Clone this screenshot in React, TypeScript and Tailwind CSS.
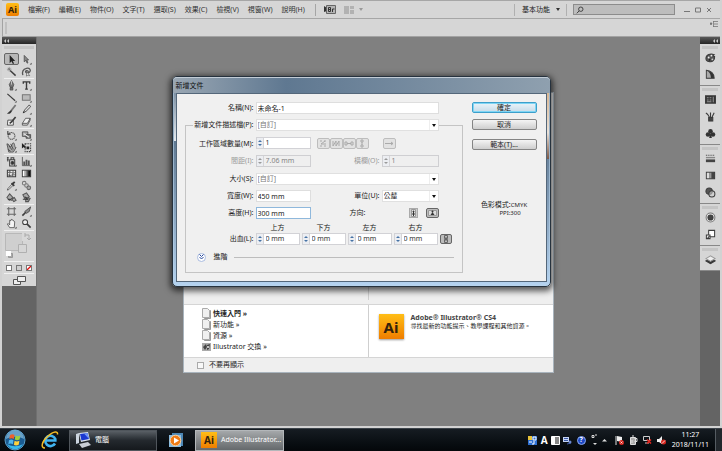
import { useId, type ReactNode } from "react";

type Kids = { children?: ReactNode };

function Ico({ children, size = "size-3" }: Kids & { size?: string }) {
  return (
    <svg viewBox="0 0 12 12" className={`${size} shrink-0`} fill="none" stroke="#3c3c3c" strokeWidth="1.100" aria-hidden="true">
      {children}
    </svg>
  );
}

const corner = <path d="M11.5 9.5v2h-2z" fill="#333" stroke="none" />;

const toolGroups: { name: string; art: ReactNode }[][] = [
  [
    { name: "選取工具", art: <path d="M4 1v9l2-2 1.5 3 1.3-.7L7.4 7.500H10z" fill="#222" stroke="none" /> },
    { name: "直接選取", art: <><path d="M3.500 1.500v7l1.800-1.500 1.400 3 .9-.5L6.300 6.500h2z" fill="#888" stroke="#444" strokeWidth=".8" />{corner}</> },
    { name: "魔術棒", art: <><path d="M4.500 5l6 5.500" strokeWidth="1.500" /><path d="M3.500 1v5M1 3.500h5M2 2l3 3M5 2L2 5" strokeWidth=".6" stroke="#666" /></> },
    { name: "套索", art: <><path d="M2 10c-1-3 0-7 4-7.500s5 2 3.500 4-5 1-4.500-.5 3-1 3 .5" stroke="#555" strokeWidth="1.400" /><path d="M6 6v5l1.500-1 2 .5z" fill="#eee" strokeWidth=".6" /></> },
  ],
  [
    { name: "鋼筆", art: <><path d="M6 .5L3.500 5 4.500 8h3L8.500 5zM4.500 8.500h3v2.500h-3z" fill="#777" strokeWidth=".7" /><path d="M6 1v4" stroke="#eee" strokeWidth=".7" />{corner}</> },
    { name: "文字", art: <><path d="M2.500 4V2h7v2M6 2v8M4.500 10h3" strokeWidth="1.500" />{corner}</> },
    { name: "線段", art: <><path d="M1.500 2l8.500 7.500" strokeWidth="1.300" />{corner}</> },
    { name: "矩形", art: <><path d="M1.500 3h8.500v6H1.500z" fill="#bbb" stroke="#777" />{corner}</> },
    { name: "筆刷", art: <><path d="M10.500 1L5.500 7.500" strokeWidth="1.900" stroke="#777" /><path d="M5.500 6.500L1 10.500c2 .6 4.500 0 5.500-3z" fill="#333" stroke="none" /></> },
    { name: "鉛筆", art: <><path d="M9 1L4 6.500 2.500 9.500 5.500 8 10.500 3z" fill="#ddd" strokeWidth=".9" /><path d="M2 10l1-2 1 1z" fill="#222" stroke="none" />{corner}</> },
    { name: "點滴筆刷", art: <><path d="M2 4.500h6v5.500H1.500z" fill="#f3f3f3" strokeWidth=".9" /><path d="M10.500 1L6 6.500 4 8" strokeWidth="1.800" /></> },
    { name: "橡皮擦", art: <><path d="M5 2.500h5L7 8H1.500z" fill="#eee" strokeWidth=".8" /><path d="M1.500 8v2h5.500l3-5.500v-2" strokeWidth=".8" />{corner}</> },
  ],
  [
    { name: "旋轉", art: <><circle cx="6" cy="6.500" r="3.700" strokeDasharray="1.500 .5" stroke="#555" /><path d="M2 1v3.500h3" strokeWidth="1.200" />{corner}</> },
    { name: "縮放", art: <><path d="M1.500 2h6v5h-6z" fill="#aaa" strokeWidth=".8" /><path d="M5.500 5h5v4h-5z" fill="#777" strokeWidth=".8" /><path d="M3 4l6 4" stroke="#eee" />{corner}</> },
    { name: "彎曲", art: <><path d="M1 2c3 0 2 3 4 3s1-4 3-4 1 6 3 5l-3 5H3z" fill="#aaa" strokeWidth=".8" /><path d="M3 4l4 5M5 2l3 6M2 8l3 2" strokeWidth=".9" />{corner}</> },
    { name: "任意變形", art: <><path d="M4.500 2h6v8.500h-6z" strokeDasharray="1.500 1" /><path d="M1 1v6l2-1.500 2 2V5zM6 5h3v3H6z" fill="#222" stroke="none" /></> },
  ],
  [
    { name: "符號噴灑器", art: <><path d="M4 4h5.500v7H4z" fill="#ddd" /><path d="M5.500 4V2h3v2M1 2h2M1 4h2M2 1v5" /><circle cx="7" cy="7.500" r="1.500" fill="#333" />{corner}</> },
    { name: "長條圖", art: <><path d="M1.500 1v9.500H10" strokeWidth=".8" /><path d="M2.500 6h2v4h-2zM5 4h2v6H5zM7.500 5h2v5h-2z" fill="#555" stroke="none" />{corner}</> },
    { name: "網格", art: <><path d="M1.500 2.500h9v7h-9z" fill="#eee" /><path d="M2 5c3-2 5 2 8 0M2 7.500c3 2 5-1 8 0M4 2.500c1 3-1 4 0 7M7.500 2.500c1 3-1 4 0 7" strokeWidth=".8" /></> },
    { name: "漸層", art: <><path d="M1.500 2.500h9v7h-9z" fill="#555" /><path d="M2 3h2v6H2z" fill="#fff" stroke="none" /><path d="M4 3h2v6H4z" fill="#aaa" stroke="none" /><path d="M8 3h2v6H8z" fill="#111" stroke="none" /></> },
    { name: "檢色滴管", art: <><path d="M6.500 4.500L2 9.500 1.500 11 3 10.500 7.500 6z" fill="#eee" strokeWidth=".8" /><path d="M6 3.500l3 3M7 4.500L9.500 2" strokeWidth="2" />{corner}</> },
    { name: "漸變", art: <><circle cx="3.500" cy="3.500" r="2" fill="#ddd" stroke="#777" /><circle cx="6" cy="6" r="2" fill="#ccc" stroke="#777" /><circle cx="8.500" cy="8.500" r="2" fill="#aaa" stroke="#666" /></> },
    { name: "即時上色油漆桶", art: <><path d="M1 6l3-4 3.500 4L4 9zM6.500 8l2.500-2 2 3-2.500 1.500z" fill="#aaa" stroke="#555" /><path d="M2 8.500c2-1 3-1 4 1" /></> },
    { name: "即時上色選取", art: <><path d="M2 3l4-2 3 4-4 4zM6 6l4 1-2 3.500H5z" fill="#aaa" stroke="#555" /><path d="M4 5l4 4M2 8h6" /></> },
  ],
  [
    { name: "工作區域", art: <path d="M3 1v10M9 1v10M1 3h10M1 9h10" stroke="#666" /> },
    { name: "切片", art: <><path d="M1.500 10.500L6 6" strokeWidth="1.800" /><path d="M10.500 1L4 6l2 2 3-2z" fill="#888" strokeWidth=".8" />{corner}</> },
    { name: "手形", art: <><path d="M4 10.500L1.500 6.500l1-.5 1.500 1.500V2.500l1.300.5.4-1.500 1.200.2.500 1 1.300.5.8 1L9 10.500z" fill="#f5f5f5" strokeWidth=".8" />{corner}</> },
    { name: "放大鏡", art: <><circle cx="4.500" cy="4.500" r="2.700" fill="#eee" /><path d="M6.500 6.500l4 4" strokeWidth="1.800" /></> },
  ],
];

const dockGroups: { name: string; art: ReactNode }[][] = [
  [
    { name: "顏色", art: <><path d="M1 7c0-4 5-6 9-4-2 1-1 2 .5 2C11 9 8 11 5 10.500 2 10.500 1 9 1 7z" fill="#555" /><circle cx="4" cy="6" r="1" fill="#eee" stroke="none" /><circle cx="7" cy="4" r="1" fill="#eee" stroke="none" /><circle cx="5" cy="8.500" r="1" fill="#222" stroke="none" /><circle cx="8" cy="8" r="1" fill="#ccc" stroke="none" /></> },
    { name: "顏色參考", art: <><path d="M1.500 1.500c5 0 8.500 4 8.500 8.500H1.500z" fill="#333" /><path d="M2 2c3 1 4 4 4.500 7.500H2z" fill="#aaa" stroke="none" /></> },
  ],
  [
    { name: "色票", art: <><path d="M.5 2h11v8H.5z" fill="#333" /><path d="M2 4h2M5 4h2M2 6.500h2M5 6.500h2M2 8.500h5M9 3v6" stroke="#999" /></> },
    { name: "筆刷", art: <><path d="M4 7h4.500v4H4z" fill="#444" /><path d="M5 7L2.500 3M6 7V1.500M7.500 7L10 2M1 2l2 2" strokeWidth="1.200" /></> },
    { name: "符號", art: <><circle cx="6" cy="3.500" r="2.500" fill="#333" stroke="none" /><circle cx="3.300" cy="7" r="2.500" fill="#333" stroke="none" /><circle cx="8.700" cy="7" r="2.500" fill="#333" stroke="none" /><path d="M6 5l1.500 6h-3z" fill="#333" stroke="none" /></> },
  ],
  [
    { name: "筆畫", art: <><path d="M1 2.500h10" strokeDasharray="1 1" /><path d="M1 5h10" stroke="#888" strokeWidth="1.500" /><path d="M1 8.500h10" stroke="#444" strokeWidth="3" /></> },
    { name: "漸層", art: <><path d="M1.500 2.500h9v7h-9z" fill="#444" /><path d="M2 3h2.500v6H2z" fill="#ddd" stroke="none" /><path d="M4.500 3H7v6H4.500z" fill="#999" stroke="none" /></> },
    { name: "透明度", art: <><circle cx="4.500" cy="4.500" r="3.500" fill="#555" /><circle cx="7.500" cy="7.500" r="3.300" fill="#ccc" fillOpacity=".6" /></> },
  ],
  [
    { name: "外觀", art: <><circle cx="6" cy="6" r="4.800" fill="#eee" stroke="#777" /><circle cx="6" cy="6" r="2.800" fill="#444" /></> },
    { name: "繪圖樣式", art: <><path d="M4 1.500h6.500v7H4z" fill="#fff" /><path d="M1.500 6.500h4v4h-4z" fill="#eee" /><path d="M3 10l2-2.500" /></> },
  ],
  [{ name: "圖層", art: <><path d="M1 7.500L6 5l5 2.500-5 3z" fill="#333" /><path d="M1 5L6 2l5 3-5 3z" fill="#eee" stroke="#999" /></> }],
];

const menus = ["檔案(F)", "編輯(E)", "物件(O)", "文字(T)", "選取(S)", "效果(C)", "檢視(V)", "視窗(W)", "說明(H)"];

function AiBadge({ className }: { className: string }) {
  return (
    <span className={`flex shrink-0 items-center justify-center bg-linear-to-b from-[#ffbe16] to-[#ee7d00] font-bold text-[#33210a] ${className}`}>
      Ai
    </span>
  );
}

function MenuBar() {
  return (
    <header className="flex h-[19px] items-center border-t border-b border-[#a6a6a6] bg-[#d6d6d6] pr-2 pl-1 text-[#333]">
      <AiBadge className="mr-[9px] size-[13px] rounded-[2px] text-[9px]" />
      <nav className="flex gap-[9px]">
        {menus.map((m) => (
          <button key={m} className="whitespace-nowrap">{m}</button>
        ))}
      </nav>
      <span className="mr-2 ml-2.5 h-3 w-px bg-[#a5a5a5]" />
      <button className="flex h-[9px] items-center" aria-label="Bridge">
        <svg viewBox="0 0 12 9" className="h-[9px] w-3" aria-hidden="true">
          <path d="M0 1l3 2v3L0 7z" fill="#333" />
          <path d="M2.500.5h9v8h-9z" fill="#b5b5b5" stroke="#666" />
          <path d="M4.500 2.500v4h2v-4zM4.500 4.500h2M8.500 7V4h2" fill="none" stroke="#333" />
        </svg>
      </button>
      <button className="ml-2 flex items-center gap-1" aria-label="排列文件">
        <svg viewBox="0 0 11 8" className="h-2 w-[11px]" aria-hidden="true">
          <path d="M0 0h5v8H0zM6 0h4v3H6zM6 4h4v4H6z" fill="#b2b2b2" />
        </svg>
        <svg viewBox="0 0 4 3" className="h-[3px] w-1" aria-hidden="true"><path d="M0 0h4L2 3z" fill="#999" /></svg>
      </button>
      <div className="ml-auto flex items-center">
        <span className="h-3 w-px bg-[#b0b0b0]" />
        <button className="flex items-center gap-1.5 pr-1.5 pl-[7px] text-[#222]">
          基本功能
          <svg viewBox="0 0 4 3" className="h-[3px] w-1" aria-hidden="true"><path d="M0 0h4L2 3z" fill="#333" /></svg>
        </button>
        <span className="mr-1.5 h-3 w-px bg-[#b0b0b0]" />
        <label className="mr-px flex h-[11px] w-[102px] items-center border border-[#8c8c8c] bg-[#bdbdbd] pl-0.5">
          <svg viewBox="0 0 8 8" className="size-2 shrink-0" fill="none" stroke="#444" aria-hidden="true">
            <circle cx="4.800" cy="3.200" r="2.200" /><path d="M3.200 4.800L.8 7.300" />
          </svg>
          <input aria-label="搜尋" className="min-w-0 flex-1 bg-transparent outline-none" />
        </label>
        <div className="flex gap-[5px] pl-2">
          <button aria-label="最小化"><svg viewBox="0 0 6 6" className="size-1.5"><path d="M0 4.500h6" stroke="#777" /></svg></button>
          <button aria-label="最大化"><svg viewBox="0 0 6 6" className="size-1.5"><path d="M.5 1h5v4h-5z" fill="none" stroke="#777" /></svg></button>
          <button aria-label="關閉"><svg viewBox="0 0 6 6" className="size-1.5"><path d="M1 1l4 4M5 1L1 5" stroke="#777" /></svg></button>
        </div>
      </div>
    </header>
  );
}

function OptionsBar() {
  return (
    <div className="flex h-[18px] items-start justify-between border-b border-l border-[#a3a3a3] bg-[#d6d6d6] pr-0.5">
      <span className="mt-[3px] ml-0.5 h-3 w-0.5 bg-[#c0c0c0]" />
      <button aria-label="面板選單" className="mt-0.5">
        <svg viewBox="0 0 8 6" className="h-1.5 w-2"><path d="M0 2h2L1 4zM3 .5h5M4 3h4M3 5.500h5M3.500 0v6" fill="#555" stroke="#777" strokeWidth=".8" /></svg>
      </button>
    </div>
  );
}

function PanelHead({ end }: { end?: boolean }) {
  return (
    <div className={`flex h-[7px] shrink-0 items-center bg-linear-to-b from-[#5a5a5a] to-[#262626] px-0.5 ${end ? "justify-end" : ""}`}>
      <svg viewBox="0 0 5 4" className="h-1 w-[5px]" aria-hidden="true"><path d="M2 0L0 2l2 2zM5 0L3 2l2 2z" fill="#ccc" /></svg>
    </div>
  );
}

function Toolbox() {
  return (
    <aside className="flex w-[35px] shrink-0 flex-col border-r border-[#707070] bg-[#646464]">
      <PanelHead />
      <div className="bg-[#d6d6d6] px-0.5">
        <div className="py-0.5 pb-1"><div className="h-[3px] bg-[#c5c5c5]" /></div>
        {toolGroups.map((group, g) => (
          <div key={g} className="grid grid-cols-2 border-b border-[#f0f0f0] pb-px">
            {group.map((t, i) => (
              <button
                key={t.name}
                aria-label={t.name}
                className={`flex h-3 items-center justify-center ${g === 0 && i === 0 ? "rounded-[2px] border border-[#666] bg-[#b8b8b8]" : ""}`}
              >
                <Ico size="size-[11px]">{t.art}</Ico>
              </button>
            ))}
          </div>
        ))}
        <div className="border-b border-[#f0f0f0] py-px">
          <svg viewBox="0 0 30 28" className="h-7 w-full" aria-hidden="true">
            <path d="M1.500 1.500h17v17h-17z" fill="#cfcfcf" stroke="#b8b8b8" />
            <path d="M14.500 12.500h8v8h-8z" fill="#d6d6d6" stroke="#b0b0b0" />
            <path d="M18 0h9v9h-9z" fill="#d8d8d8" />
            <path d="M21 3h4v4M21 1v4M23 6l2 2 2-2" fill="none" stroke="#aaa" />
            <path d="M4.500 21.500h4v4h-4z" fill="#aaa" stroke="#999" /><path d="M2 19h5v5H2z" fill="#fff" />
          </svg>
        </div>
        <div className="flex h-3 items-center justify-around border-b border-[#f0f0f0]">
          <button aria-label="顏色" className="size-1.5 border border-[#777] bg-white" />
          <button aria-label="漸層" className="size-1.5 border border-[#777] bg-[#d0d0d0]" />
          <button aria-label="無" className="size-1.5 border border-[#777] bg-white">
            <svg viewBox="0 0 4 4" className="size-1"><path d="M0 4l4-4" stroke="#e01010" strokeWidth="1.300" /></svg>
          </button>
        </div>
        <div className="flex h-3 items-center justify-center">
          <button aria-label="螢幕模式">
            <svg viewBox="0 0 13 9" className="h-[9px] w-[13px]" fill="#eee" stroke="#555"><path d="M.5 3.500h7v5h-7z" /><path d="M4.500.5h8v5h-8z" /></svg>
          </button>
        </div>
      </div>
    </aside>
  );
}

function Dock() {
  return (
    <aside className="flex w-5 shrink-0 flex-col bg-[#646464]">
      <PanelHead end />
      {dockGroups.map((group, g) => (
        <div key={g} className="border-b border-[#888] bg-[#d6d6d6] pt-0.5 pb-0.5">
          <div className="mx-0.5 h-[3px] bg-[#c5c5c5]" />
          {group.map((p) => (
            <button key={p.name} aria-label={p.name} className="flex h-[17px] w-full items-center justify-center">
              <Ico size="size-[11px]">{p.art}</Ico>
            </button>
          ))}
        </div>
      ))}
    </aside>
  );
}

function WelcomeScreen() {
  const page = (
    <svg viewBox="0 0 9 11" className="h-[11px] w-[9px]" aria-hidden="true">
      <path d="M2.500 2.500h6v8h-6z" fill="#bbb" stroke="#999" /><path d="M.5.5h5l2 2v7h-7z" fill="#f0f0f0" stroke="#aaa" />
    </svg>
  );
  return (
    <section className="absolute inset-x-0 top-[55px] mx-auto flex h-[281px] w-[371px] flex-col border border-[#a9b4bd] bg-[#efefef]">
      <div className="flex flex-1 justify-center pb-1"><span className="w-px bg-[#cfcfcf]" /></div>
      <div className="grid h-[54px] grid-cols-2 border-t border-b border-[#d5d5d5] bg-white">
        <ul className="flex flex-col border-r border-[#cfcfcf] pt-[3px] pl-[18px] text-[#222]">
          {["快速入門", "新功能", "資源"].map((t, i) => (
            <li key={t} className="flex h-[11px] items-center gap-0.5">
              {page}
              <a href="#" className={i === 0 ? "font-bold" : ""}>{t} »</a>
            </li>
          ))}
          <li className="flex h-3 items-center gap-0.5">
            <svg viewBox="0 0 9 8" className="h-2 w-[9px]" aria-hidden="true">
              <path d="M0 0h9v8H0z" fill="#aaa" /><path d="M1 4l3-3 1 3-2 3zM5 2l3-1-1 5-2 1z" fill="#444" /><circle cx="6" cy="4" r="1" fill="#eee" />
            </svg>
            <a href="#">Illustrator 交換 »</a>
          </li>
        </ul>
        <div className="flex items-start gap-[7px] pt-2 pl-2.5">
          <AiBadge className="mt-px size-[25px] text-[15px] shadow-[0_1px_2px_#999]" />
          <div className="text-[#444]">
            <h2 className="leading-[9px] font-bold">Adobe® Illustrator® CS4</h2>
            <p className="text-[6px] leading-[9px] whitespace-nowrap text-[#222]">尋找最新的功能提示、教學課程和其他資源。</p>
          </div>
        </div>
      </div>
      <label className="flex h-[14px] items-center gap-[5px] pl-[13px] text-[#222]">
        <input type="checkbox" className="size-[7px] appearance-none border border-[#aaa] bg-[#f8f8f8]" />
        不要再顯示
      </label>
    </section>
  );
}

function SelectBox({ id, value, className, label }: { id?: string; value: string; className: string; label?: string }) {
  return (
    <span className={`relative flex h-3 ${className}`}>
      <select id={id} aria-label={label} className="w-full appearance-none border border-[#e0e0e0] bg-white pl-px outline-none">
        <option>{value}</option>
      </select>
      <span className="pointer-events-none absolute inset-y-px right-px flex w-[9px] items-center justify-center border-l border-[#eee]">
        <svg viewBox="0 0 4 3" className="h-[3px] w-1" aria-hidden="true"><path d="M0 0h4L2 3z" fill="#111" /></svg>
      </span>
    </span>
  );
}

function Spin({ id, value, className, disabled, label }: { id?: string; value: string; className: string; disabled?: boolean; label?: string }) {
  return (
    <span className={`flex h-3 border ${className} ${disabled ? "border-[#cfcfd2] bg-[#efefef] text-[#858585]" : "border-[#d2d2d6] bg-white text-[#333]"}`}>
      <span className="flex w-[7px] shrink-0 flex-col items-center justify-evenly border-r border-[#d5d5d8] bg-[#eceef2]">
        <svg viewBox="0 0 4 2" className="h-0.5 w-1" aria-hidden="true"><path d="M0 2h4L2 0z" fill={disabled ? "#999" : "#4673a5"} /></svg>
        <svg viewBox="0 0 4 2" className="h-0.5 w-1" aria-hidden="true"><path d="M0 0h4L2 2z" fill={disabled ? "#999" : "#4673a5"} /></svg>
      </span>
      <input id={id} aria-label={label} defaultValue={value} disabled={disabled} className="w-full min-w-0 bg-transparent pl-0.5 outline-none" />
    </span>
  );
}

function Lbl({ htmlFor, children, dim }: Kids & { htmlFor?: string; dim?: boolean }) {
  return (
    <label htmlFor={htmlFor} className={`text-right whitespace-nowrap ${dim ? "text-[#9a9a9a]" : ""}`}>{children}</label>
  );
}

function PushButton({ children, primary }: Kids & { primary?: boolean }) {
  return (
    <button
      className={`flex h-[11px] items-center justify-center rounded-[2px] border bg-linear-to-b ${primary ? "border-[#3c9fcb] from-[#eaf4fa] to-[#c6dbe8] ring-1 ring-[#7fd6f5] ring-inset" : "border-[#858585] from-[#f4f4f4] to-[#cecece]"}`}
    >
      {children}
    </button>
  );
}

const flowIcons = [
  { name: "依列設定格點", d: "M2 2h2M6 2h2M7 2L3 5h5M2 7h2M6 7h2" },
  { name: "依欄設定格點", d: "M2 2v5L5 2v5L8 2v5" },
  { name: "依列排列", d: "M1 3v3h2V3zM3 4.500h4M7 3v3h2V3z" },
  { name: "依欄排列", d: "M4 1h2v2H4zM5 3v3M4 6h2v2H4z" },
];

function FlowButton({ name, d }: { name: string; d: string }) {
  return (
    <button aria-label={name} disabled className="flex h-[11px] w-[13px] items-center justify-center rounded-[2px] border border-[#bdbdbd] bg-[#e2e2e2]">
      <svg viewBox="0 0 10 9" className="h-[9px] w-2.5" fill="none" stroke="#aaa"><path d={d} /></svg>
    </button>
  );
}

function NewDocumentDialog() {
  const id = useId();
  const row = "grid grid-cols-[61px_92px_30px_57px] items-center gap-x-0.5";
  return (
    <section
      role="dialog"
      aria-labelledby={`${id}-title`}
      className="absolute inset-x-0 top-[76px] mx-auto w-[379px] rounded-[5px] border border-[#26323e] bg-linear-to-b from-[#7f91a3] via-[#5f7891] via-30% to-[#b5d3f0] px-[3px] pb-1 shadow-[0_2px_6px_2px_rgba(0,0,0,0.65)] ring-1 ring-[#b9d4ea]/60 ring-inset"
    >
      <span aria-hidden="true" className="absolute top-4 left-px h-12 w-0.5 bg-linear-to-b from-[#7f91a3] to-[#e6ebef]" />
      <span aria-hidden="true" className="absolute top-4 right-px h-[66px] w-0.5 bg-linear-to-b from-[#d9b793] via-[#e9e1d8] via-60% to-[#7d5a48]" />
      <h1
        id={`${id}-title`}
        className="-mx-[3px] flex h-4 items-center rounded-t-[4px] border-t border-[#c2ccd6] bg-linear-to-r from-[#9aa7b3] via-[#5f7891] via-30% to-[#8fa0af] pl-[3px] text-[#111]"
      >
        新增文件
      </h1>
      <div className="flex justify-between border border-[#54677a] bg-[#f0f0f0] pr-[9px] pb-2 pl-2 text-[#222]">
        <form className="w-[278px] pt-2">
          <div className={`${row} mb-[5px] pl-2`}>
            <Lbl htmlFor={`${id}-n`}>名稱(N):</Lbl>
            <input id={`${id}-n`} defaultValue="未命名-1" className="col-span-3 h-3 w-[183px] border border-[#dedede] bg-white pl-px outline-none" />
          </div>
          <fieldset className="border border-[#c4c4c4] pb-2.5 pl-[7px]">
            <legend className="flex items-center gap-0.5">
              <span className="flex w-[61px] justify-end"><Lbl htmlFor={`${id}-p`}>新增文件描述檔(P):</Lbl></span>
              <SelectBox id={`${id}-p`} value="[自訂]" className="w-[183px] text-[#777]" />
            </legend>
            <div className={`${row} h-[18px] items-end pt-1.5`}>
              <Lbl htmlFor={`${id}-m`}>工作區域數量(M):</Lbl>
              <Spin id={`${id}-m`} value="1" className="w-[55px]" />
              <div className="col-span-2 -ml-[33px] flex">
                {flowIcons.map((f) => <FlowButton key={f.name} {...f} />)}
                <span className="w-3.5" />
                <FlowButton name="改為由右至左版面" d="M1 4.500h8M7 3l2 1.500L7 6" />
              </div>
            </div>
            <div className={`${row} mt-1.5 h-3`}>
              <Lbl htmlFor={`${id}-i`} dim>間距(I):</Lbl>
              <Spin id={`${id}-i`} value="7.06 mm" disabled className="w-[55px]" />
              <Lbl htmlFor={`${id}-o`} dim>橫欄(O):</Lbl>
              <Spin id={`${id}-o`} value="1" disabled className="w-[57px]" />
            </div>
            <div className={`${row} mt-1.5 h-3`}>
              <Lbl htmlFor={`${id}-s`}>大小(S):</Lbl>
              <SelectBox id={`${id}-s`} value="[自訂]" className="col-span-3 text-[#777]" />
            </div>
            <div className={`${row} mt-[5px] h-3`}>
              <Lbl htmlFor={`${id}-w`}>寬度(W):</Lbl>
              <input id={`${id}-w`} defaultValue="450 mm" className="h-3 w-[55px] border border-[#dedede] bg-white pl-px outline-none" />
              <Lbl htmlFor={`${id}-u`}>單位(U):</Lbl>
              <SelectBox id={`${id}-u`} value="公釐" className="w-full" />
            </div>
            <div className={`${row} mt-[5px] h-3`}>
              <Lbl htmlFor={`${id}-h`}>高度(H):</Lbl>
              <input id={`${id}-h`} defaultValue="300 mm" className="h-3 w-[55px] border border-[#8fb8dc] bg-white pl-px outline-none" />
              <span>方向:</span>
              <div className="flex items-center justify-end gap-2">
                <button type="button" aria-label="直式" className="flex h-2.5 w-[9px] items-center justify-center border border-[#aaa] bg-[#ccc]">
                  <svg viewBox="0 0 7 8" className="h-2 w-[7px]"><path d="M1.500.5h4v7h-4z" fill="#eee" stroke="#999" /><circle cx="3.500" cy="2.500" r="1" fill="#333" /><path d="M3.500 3v4M2 5h3" stroke="#333" /></svg>
                </button>
                <button type="button" aria-label="橫式" aria-pressed="true" className="flex h-2.5 w-[13px] items-center justify-center rounded-[2px] border border-[#666] bg-[#bdbdbd]">
                  <svg viewBox="0 0 9 8" className="h-2 w-[9px]"><path d="M.5 1.500h8v5h-8z" fill="#ddd" stroke="#999" /><circle cx="4.500" cy="2.500" r="1" fill="#333" /><path d="M2.500 6l2-3 2 3z" fill="#333" /></svg>
                </button>
              </div>
            </div>
            <div className="mt-1 flex items-end gap-0.5">
              <span className="flex h-3 w-[61px] items-center justify-end">出血(L):</span>
              {["上方", "下方", "左方", "右方"].map((side) => (
                <label key={side} className="flex w-[44px] flex-col items-center">
                  <span className="h-2.5">{side}</span>
                  <Spin value="0 mm" className="w-full" label={`出血${side}`} />
                </label>
              ))}
              <button type="button" aria-label="使所有設定相同" aria-pressed="true" className="mb-px flex h-2.5 w-3 items-center justify-center rounded-[2px] border border-[#666] bg-[#bcbcbc]">
                <svg viewBox="0 0 6 8" className="h-2 w-1.5"><path d="M1.500.5h3v3h-3zM1.500 4.500h3v3h-3zM3 2v4" fill="none" stroke="#666" /></svg>
              </button>
            </div>
            <div className="mt-[7px] flex h-2.5 items-center pr-2 pl-1">
              <button type="button" aria-label="展開進階" className="flex size-[9px] items-center justify-center rounded-full border border-[#a9bbe0] bg-white">
                <svg viewBox="0 0 5 6" className="h-1.5 w-[5px]" fill="none" stroke="#27489c"><path d="M.5.500l2 2 2-2M.5 3l2 2 2-2" /></svg>
              </button>
              <span className="ml-2">進階</span>
              <span className="ml-1.5 h-px flex-1 bg-[#bdbdbd]" />
            </div>
          </fieldset>
        </form>
        <div className="flex w-[65px] flex-col pt-2">
          <PushButton primary>確定</PushButton>
          <div className="h-1.5" />
          <PushButton>取消</PushButton>
          <div className="h-[9px]" />
          <PushButton>範本(T)...</PushButton>
          <dl className="mt-[51px] text-center leading-[8px]">
            <div className="flex justify-center"><dt>色彩模式:</dt><dd className="text-[6px]">CMYK</dd></div>
            <div className="flex justify-center pl-3 text-[6px]"><dt>PPI:</dt><dd>300</dd></div>
          </dl>
        </div>
      </div>
    </section>
  );
}

function Taskbar() {
  return (
    <footer className="flex h-[23px] shrink-0 items-center border-t border-[#3b4249] bg-linear-to-b from-[#161c22] to-[#04070a] text-white">
      <button aria-label="開始" className="ml-1">
        <svg viewBox="0 0 22 22" className="size-[22px]">
          <circle cx="11" cy="11" r="10" fill="#1b5b91" stroke="#5b9fca" />
          <path d="M2 10a9 9 0 0118 0c-6-3-12-3-18 0z" fill="#8abfe0" fillOpacity=".7" />
          <path d="M3 15c4 7 12 7 16 0-5 3-11 3-16 0z" fill="#36b8ec" />
          <path d="M6 6c2-1 3-1 4.500 0l-.7 4c-1.500-1-3-1-4.500 0z" fill="#f0602c" />
          <path d="M11.500 6.500c1.500 1 3 1 4.800 0l-.7 4c-2 1-3.300 1-4.800 0z" fill="#9cd13c" />
          <path d="M5 11.200c1.500-1 3-1 4.500 0l-.7 4c-1.500-1-3-1-4.500 0z" fill="#4fb6ee" />
          <path d="M10.600 11.700c1.500 1 3 1 4.800 0l-.7 4c-2 1-3.300 1-4.800 0z" fill="#ffd23c" />
        </svg>
      </button>
      <button aria-label="Internet Explorer" className="ml-[15px]">
        <svg viewBox="0 0 18 18" className="size-[18px]" fill="none">
          <path d="M14 12.500a5.200 5.200 0 11.300-4.500v1.500H5" stroke="#41b4f0" strokeWidth="2.600" />
          <path d="M4 17C-1 17 1 10 7 5s10-5 9.500-1.500" stroke="#f5bd27" strokeWidth="1.500" />
        </svg>
      </button>
      <button className="ml-2.5 flex h-[21px] w-[88px] items-center gap-1 border border-[#50565c] bg-linear-to-b from-[#5a6066] via-[#24292e] to-[#15191d] pl-[5px]">
        <svg viewBox="0 0 16 16" className="size-4" aria-hidden="true">
          <path d="M1 2l3-1v10l-3 1z" fill="#ccd5df" /><path d="M4 1l9-1 2 8-9 2z" fill="#dde6f0" /><path d="M5 2l7.500-1 1.500 6-7.500 1.500z" fill="#1b38cf" /><path d="M9 1.500l3.500-.5 1.500 6z" fill="#6f94f5" /><path d="M4 12l9-2 3 3-9 3z" fill="#c9ced5" />
        </svg>
        電腦
      </button>
      <button aria-label="Windows Media Player" className="ml-3">
        <svg viewBox="0 0 15 15" className="size-[15px]">
          <path d="M3 0h11v13H3z" fill="#4d88b5" /><path d="M0 2h12v12H0z" fill="#8abce0" /><circle cx="6.500" cy="7.500" r="5.300" fill="#ef7c16" stroke="#ffd09b" /><path d="M5 4.500l5 3-5 3z" fill="#fff" />
        </svg>
      </button>
      <button className="ml-[11px] flex h-[21px] w-[89px] items-center gap-1 border border-[#b3b7ba] bg-linear-to-b from-[#a5a8aa] to-[#65696c] pl-[5px]">
        <AiBadge className="size-4 text-[10px]" />
        <span className="whitespace-nowrap">Adobe Illustrator...</span>
      </button>
      <div className="ml-auto flex items-center">
        <div className="flex items-center gap-[3px] pr-[3px]">
          <svg viewBox="0 0 9 9" className="mr-px size-[9px]" aria-hidden="true"><path d="M0 0h9v9H0z" fill="#2d6fd2" /><path d="M0 0h4v4H0z" fill="#e8c33a" /><path d="M5 1h3v3H5zM1 6h3M6 5v3H4" fill="none" stroke="#fff" /></svg>
          <span className="text-[10px] leading-[10px] font-bold">A</span>
          <svg viewBox="0 0 9 9" className="size-[9px]" aria-hidden="true"><path d="M.5.500h8v8h-8z" fill="#888" stroke="#fff" /><path d="M1 1h3v7H1z" fill="#fff" /></svg>
          <svg viewBox="0 0 9 9" className="size-[9px]" aria-hidden="true"><path d="M0 1h6v5H0z" fill="#c6d5f4" /><path d="M1 2.500h4M1 4.500h4M4 8l4-1" stroke="#3a58a8" /><circle cx="7" cy="6" r="1.500" fill="#6b86cc" /></svg>
          <span className="mx-0.5 flex size-[9px] items-center justify-center rounded-full border border-[#8da9ef] bg-[#1d48c4] font-bold">?</span>
          <svg viewBox="0 0 7 12" className="h-3 w-[7px]" fill="none" stroke="#ddd" aria-hidden="true"><path d="M1 1.500h2v2H1zM4 1h2" /><path d="M2 9h4L4 11z" fill="#ddd" stroke="none" /></svg>
          <svg viewBox="0 0 5 4" className="mx-px h-1 w-[5px]" aria-hidden="true"><path d="M0 3.500h5L2.500 1z" fill="#ddd" /></svg>
        </div>
        <div className="flex gap-[5px] pl-1">
          <svg viewBox="0 0 9 10" className="h-2.5 w-[9px]" aria-hidden="true"><path d="M1 1v9" stroke="#ddd" /><path d="M2 1l5 1v5l-5-1z" fill="#eee" /><circle cx="6.500" cy="7.500" r="2.500" fill="#d6261e" /><path d="M5.500 6.500l2 2M7.500 6.500l-2 2" stroke="#fff" strokeWidth=".7" /></svg>
          <svg viewBox="0 0 9 10" className="h-2.5 w-[9px]" fill="none" stroke="#ddd" aria-hidden="true"><path d="M1.500 2.500h5v7h-5z" fill="#aaa" /><path d="M3 1h2M5.500 3.500H8v3H5.500M3 5v3" /></svg>
          <svg viewBox="0 0 9 10" className="h-2.5 w-[9px]" fill="none" aria-hidden="true"><path d="M.5 1.500h6v4h-6zM2 8h4" stroke="#ccc" /><path d="M4 4.500l4 4M8 4.500l-4 4" stroke="#e5261e" strokeWidth="1.500" /></svg>
          <svg viewBox="0 0 9 10" className="h-2.5 w-[9px]" aria-hidden="true"><path d="M0 4h2l3-3v8L2 7H0z" fill="#eee" /><circle cx="6.500" cy="7" r="2.500" fill="#d6261e" /><path d="M5 8.500l3-3" stroke="#fff" strokeWidth=".8" /></svg>
        </div>
        <time className="mx-1.5 flex flex-col text-center leading-[10px]"><span>11:27</span><span>2018/11/11</span></time>
        <button aria-label="顯示桌面" className="h-[22px] w-[7px] border-l border-[#555c62] bg-[#22272c]" />
      </div>
    </footer>
  );
}

export default function App() {
  return (
    <div className="relative flex h-screen flex-col overflow-hidden bg-black font-['Noto_Sans','Noto_Sans_CJK_TC',sans-serif] text-[7px] leading-[10px]">
      <div className="flex min-h-0 flex-1 flex-col border-r-2 border-b-2 border-l-2 border-[#d2d2d2]">
        <MenuBar />
        <OptionsBar />
        <main className="flex min-h-0 flex-1">
          <Toolbox />
          <div className="relative flex-1 bg-[#808080]"><WelcomeScreen /></div>
          <Dock />
        </main>
      </div>
      <NewDocumentDialog />
      <Taskbar />
    </div>
  );
}
